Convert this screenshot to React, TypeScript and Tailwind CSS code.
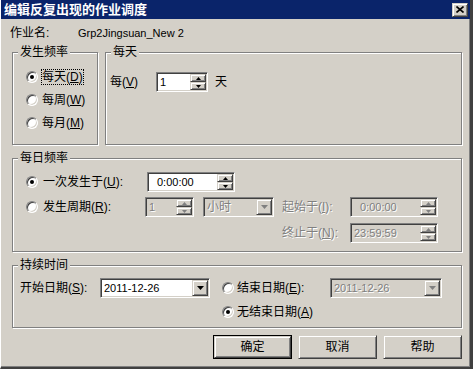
import React from 'react';

const sunken =
  'border border-t-[#808080] border-l-[#808080] border-b-white border-r-white shadow-[inset_1px_1px_0_#404040,inset_-1px_-1px_0_#d4d0c8]';
const raised =
  'border border-t-[#d4d0c8] border-l-[#d4d0c8] border-b-[#404040] border-r-[#404040] shadow-[inset_1px_1px_0_#fff,inset_-1px_-1px_0_#808080]';
const grayText = 'text-[#808080] [text-shadow:1px_1px_0_#fff]';

function Arrow({ dir, big, disabled }: { dir: 'up' | 'down'; big?: boolean; disabled?: boolean }) {
  const fill = disabled ? '#808080' : '#000';
  const w = big ? 7 : 5;
  const h = big ? 4 : 3;
  const d = dir === 'up' ? `M${w / 2} 0 L${w} ${h} L0 ${h} Z` : `M0 0 L${w} 0 L${w / 2} ${h} Z`;
  return (
    <svg width={w} height={h} viewBox={`0 0 ${w} ${h}`}>
      <path d={d} fill={fill} />
    </svg>
  );
}

function Radio({ checked }: { checked?: boolean }) {
  return (
    <span className="flex items-center justify-center w-[12px] h-[12px] shrink-0 rounded-full bg-white border border-t-[#808080] border-l-[#808080] border-b-white border-r-white shadow-[inset_1px_1px_0_#404040,inset_-1px_-1px_0_#d4d0c8]">
      {checked && <span className="w-[4px] h-[4px] rounded-full bg-black" />}
    </span>
  );
}

function SpinBox({ value, className, textPad, disabled }: { value: string; className: string; textPad: string; disabled?: boolean }) {
  return (
    <div className={`flex h-[20px] p-[1px] ${sunken} ${disabled ? 'bg-[#d4d0c8]' : 'bg-white'} ${className}`}>
      <span className={`flex-1 text-[11px] leading-[16px] ${textPad} ${disabled ? grayText : ''}`}>{value}</span>
      <div className="flex flex-col w-[16px] h-full">
        <div className={`flex-1 flex items-center justify-center bg-[#d4d0c8] ${raised}`}>
          <Arrow dir="up" disabled={disabled} />
        </div>
        <div className={`flex-1 flex items-center justify-center bg-[#d4d0c8] ${raised}`}>
          <Arrow dir="down" disabled={disabled} />
        </div>
      </div>
    </div>
  );
}

function Combo({ value, className, disabled, latin }: { value: string; className: string; disabled?: boolean; latin?: boolean }) {
  return (
    <div className={`flex h-[20px] p-[1px] ${sunken} ${disabled ? 'bg-[#d4d0c8]' : 'bg-white'} ${className}`}>
      <span className={`flex-1 pl-[2px] leading-[16px] ${latin ? 'text-[11px]' : ''} ${disabled ? grayText : ''}`}>{value}</span>
      <div className={`w-[16px] h-full flex items-center justify-center bg-[#d4d0c8] ${raised}`}>
        <Arrow dir="down" big disabled={disabled} />
      </div>
    </div>
  );
}

function GroupBox({ title, className, children }: { title: string; className: string; children?: React.ReactNode }) {
  return (
    <div className={`relative border border-[#808080] shadow-[inset_1px_1px_0_#fff,1px_1px_0_#fff] ${className}`}>
      <span className="absolute -top-[8px] left-[5px] px-[2px] bg-[#d4d0c8] leading-[14px]">{title}</span>
      {children}
    </div>
  );
}

function Button({ label, isDefault }: { label: string; isDefault?: boolean }) {
  return (
    <div className={`w-[79px] h-[24px] ${isDefault ? 'border border-black' : ''}`}>
      <div className={`w-full h-full flex items-center justify-center bg-[#d4d0c8] ${raised}`}>{label}</div>
    </div>
  );
}

export default function App() {
  return (
    <div className="w-[473px] h-[369px] flex flex-col bg-[#d4d0c8] border-l border-l-white border-r-[3px] border-r-[#404040] border-b-[2px] border-b-[#404040] shadow-[inset_-1px_-1px_0_#808080] text-[12px] text-black font-['Liberation_Sans','Noto_Sans_CJK_SC',sans-serif]">
      {/* Title bar */}
      <div className="h-[19px] shrink-0 flex items-center justify-between bg-[#0a246a] pl-[3px] pr-[2px]">
        <span className="text-white font-bold text-[13px] leading-[19px]">编辑反复出现的作业调度</span>
        <div className={`w-[16px] h-[14px] flex items-center justify-center bg-[#d4d0c8] ${raised}`}>
          <svg width="8" height="7" viewBox="0 0 8 7">
            <path d="M0.5 0.5 L7.5 6.5 M7.5 0.5 L0.5 6.5" stroke="#000" strokeWidth="1.6" />
          </svg>
        </div>
      </div>

      <div className="flex flex-col pl-[11px] pr-[8px]">
        {/* Job name */}
        <div className="mt-[7px] h-[14px] flex items-center -ml-[2px]">
          <span className="w-[68px] leading-[14px]">作业名:</span>
          <span className="text-[11px] leading-[14px]">Grp2Jingsuan_New 2</span>
        </div>

        {/* Frequency + daily */}
        <div className="mt-[12px] h-[93px] flex gap-[7px]">
          <GroupBox title="发生频率" className="w-[86px] h-full pt-[16px] pl-[13px]">
            <div className="flex flex-col gap-[7px]">
              <div className="h-[16px] flex items-center gap-[4px]">
                <Radio checked />
                <span className="leading-[14px] outline-1 outline-dotted outline-black">
                  每天(<u>D</u>)
                </span>
              </div>
              <div className="h-[16px] flex items-center gap-[4px]">
                <Radio />
                <span className="leading-[14px]">
                  每周(<u>W</u>)
                </span>
              </div>
              <div className="h-[16px] flex items-center gap-[4px]">
                <Radio />
                <span className="leading-[14px]">
                  每月(<u>M</u>)
                </span>
              </div>
            </div>
          </GroupBox>
          <GroupBox title="每天" className="flex-1 h-full pt-[19px] pl-[4px]">
            <div className="flex items-center h-[20px]">
              <span className="w-[46px]">
                每(<u>V</u>)
              </span>
              <SpinBox value="1" className="w-[52px]" textPad="pl-[2px]" />
              <span className="ml-[7px]">天</span>
            </div>
          </GroupBox>
        </div>

        {/* Daily frequency */}
        <GroupBox title="每日频率" className="mt-[13px] h-[94px] pt-[13px] pl-[13px]">
          <div className="flex items-center h-[20px]">
            <div className="w-[121px] flex items-center gap-[5px]">
              <Radio checked />
              <span>
                一次发生于(<u>U</u>):
              </span>
            </div>
            <SpinBox value="0:00:00" className="w-[88px]" textPad="pl-[8px]" />
          </div>
          <div className="flex items-center h-[20px] mt-[5px]">
            <div className="w-[119px] flex items-center gap-[5px]">
              <Radio />
              <span>
                发生周期(<u>R</u>):
              </span>
            </div>
            <SpinBox value="1" className="w-[49px]" textPad="pl-[2px]" disabled />
            <Combo value="小时" className="w-[71px] ml-[9px]" disabled />
            <span className="w-[68px] ml-[8px] text-[#808080] [text-shadow:1px_1px_0_#fff]">
              起始于(<u>I</u>):
            </span>
            <SpinBox value="0:00:00" className="w-[88px]" textPad="pl-[8px]" disabled />
          </div>
          <div className="flex items-center h-[20px] mt-[6px] ml-[256px]">
            <span className="w-[68px] text-[#808080] [text-shadow:1px_1px_0_#fff]">
              终止于(<u>N</u>):
            </span>
            <SpinBox value="23:59:59" className="w-[88px]" textPad="pl-[2px]" disabled />
          </div>
        </GroupBox>

        {/* Duration */}
        <GroupBox title="持续时间" className="mt-[13px] h-[63px] pt-[12px] pl-[7px]">
          <div className="flex items-center h-[20px]">
            <span className="w-[80px]">
              开始日期(<u>S</u>):
            </span>
            <Combo value="2011-12-26" className="w-[110px]" latin />
            <div className="ml-[12px] w-[108px] flex items-center gap-[3px]">
              <Radio />
              <span>
                结束日期(<u>E</u>):
              </span>
            </div>
            <Combo value="2011-12-26" className="w-[112px]" latin disabled />
          </div>
          <div className="flex items-center h-[16px] mt-[6px] ml-[202px] gap-[3px]">
            <Radio checked />
            <span>
              无结束日期(<u>A</u>)
            </span>
          </div>
        </GroupBox>

        {/* Buttons */}
        <div className="mt-[7px] flex justify-end gap-[6px]">
          <Button label="确定" isDefault />
          <Button label="取消" />
          <Button label="帮助" />
        </div>
      </div>
    </div>
  );
}
